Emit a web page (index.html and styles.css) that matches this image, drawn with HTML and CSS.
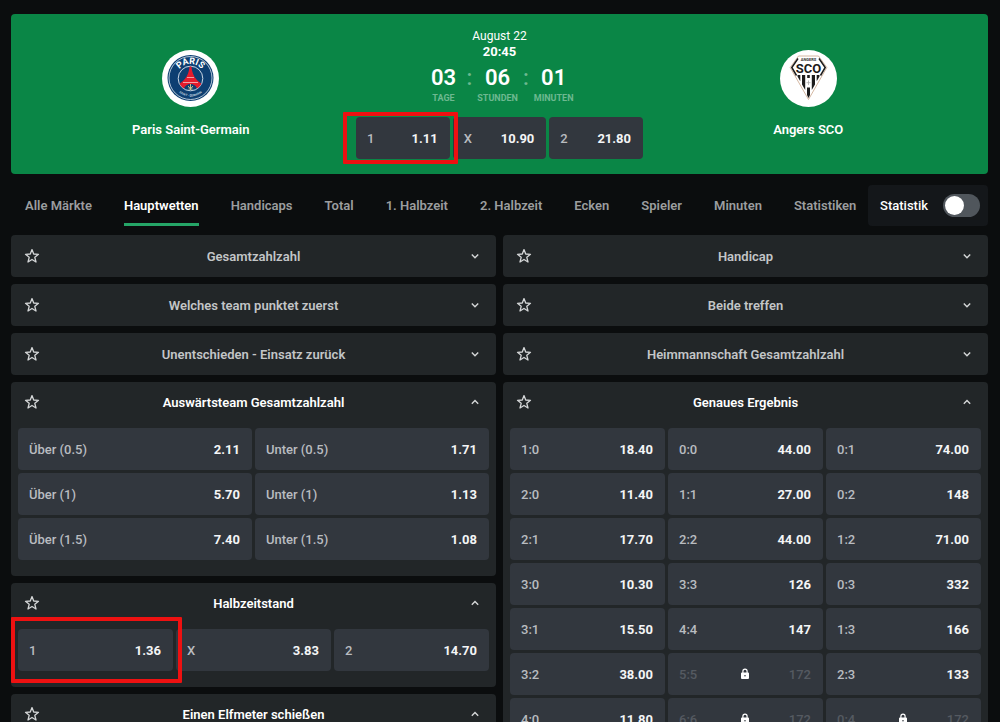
FILE: index.html
```
<!DOCTYPE html>
<html lang="de">
<head>
  <meta charset="UTF-8" />
  <meta name="viewport" content="width=device-width, initial-scale=1" />
  <title>Paris Saint-Germain - Angers SCO</title>
  <link rel="stylesheet" href="styles.css">
</head>
<body>
  <!-- shared icons -->
  <svg class="sprite" aria-hidden="true">
    <symbol id="star" viewBox="0 0 16 16">
      <path d="M8 1.6 9.700 6l4.800.3-3.700 3 1.200 4.700L8 11.500 4 14l1.200-4.700-3.700-3L6.300 6z" fill="none" stroke="currentColor" stroke-width="1.300" stroke-linejoin="round"/>
    </symbol>
    <symbol id="down" viewBox="0 0 10 10">
      <path d="M1.800 3.500 5 6.700l3.200-3.200" fill="none" stroke="currentColor" stroke-width="1.400"/>
    </symbol>
    <symbol id="up" viewBox="0 0 10 10">
      <path d="M1.800 6.700 5 3.500l3.200 3.200" fill="none" stroke="currentColor" stroke-width="1.400"/>
    </symbol>
    <symbol id="lock" viewBox="0 0 10 12">
      <path d="M2.900 5V3.300a2.100 2.100 0 0 1 4.200 0V5" fill="none" stroke="currentColor" stroke-width="1.200"/>
      <path fill-rule="evenodd" d="M2 4.400h6a1 1 0 0 1 1 1V10a1 1 0 0 1-1 1H2a1 1 0 0 1-1-1V5.400a1 1 0 0 1 1-1zM5 6.900a.8.8 0 1 0 0 1.600.8.8 0 0 0 0-1.600z" fill="currentColor"/>
    </symbol>
  </svg>

  <header class="match">
    <div class="team">
      <svg class="logo" viewBox="0 0 57 57" role="img" aria-label="Paris Saint-Germain">
        <defs>
          <path id="arcTop" d="M14 28.500a14.500 14.500 0 0 1 29 0"/>
          <path id="arcBottom" d="M10.500 28.500a18 18 0 0 0 36 0"/>
          <clipPath id="inner"><circle cx="28.500" cy="28.500" r="12"/></clipPath>
        </defs>
        <circle cx="28.500" cy="28.500" r="28.500" fill="#fff"/>
        <circle cx="28.500" cy="28" r="23" fill="#0d3f72"/>
        <circle cx="28.500" cy="28" r="21.500" fill="none" stroke="#dfe8f0" stroke-width=".8"/>
        <circle cx="28.500" cy="28.500" r="12.300" fill="none" stroke="#dfe8f0" stroke-width=".9"/>
        <g clip-path="url(#inner)">
          <path d="M27.500 16h2c.4 8 3.500 15 14 20l-6 8c-2-6.500-4.500-10-9-10s-7 3.500-9 10l-6-8c10.500-5 13.600-12 14-20z" fill="#e51b2c"/>
          <path d="M25 27.500h7M21 32.500h15" stroke="#f6dada" stroke-width=".7"/>
        </g>
        <path d="M28.500 34v6M26.300 36q.2 2 2.200 2 2 0 2.200-2M26.500 39h4" fill="none" stroke="#d7c98a" stroke-width=".9"/>
        <text class="logo-paris"><textPath href="#arcTop" startOffset="50%">PARIS</textPath></text>
        <text class="logo-sg"><textPath href="#arcBottom" startOffset="50%">SAINT - GERMAIN</textPath></text>
      </svg>
      <span class="team-name">Paris Saint-Germain</span>
    </div>

    <div class="kickoff">
      <span class="date">August 22</span>
      <strong class="time">20:45</strong>
      <div class="countdown">
        <div class="unit"><b>03</b><small>TAGE</small></div>
        <i>:</i>
        <div class="unit"><b>06</b><small>STUNDEN</small></div>
        <i>:</i>
        <div class="unit"><b>01</b><small>MINUTEN</small></div>
      </div>
      <div class="odds main-odds">
        <button class="odd marked"><span>1</span><b>1.11</b></button>
        <button class="odd"><span>X</span><b>10.90</b></button>
        <button class="odd"><span>2</span><b>21.80</b></button>
      </div>
    </div>

    <div class="team">
      <svg class="logo" viewBox="0 0 57 57" role="img" aria-label="Angers SCO">
        <circle cx="28.500" cy="28.500" r="28.500" fill="#fff"/>
        <path d="M18.500 6h20l8.300 11.500-18.300 32-18.300-32z" fill="none" stroke="#c9a58a" stroke-width=".8"/>
        <path d="M18 8.500 11.800 17.500 16.500 25.500M39 8.500l6.200 9-4.700 8" fill="none" stroke="#1c1c1c" stroke-width="1.500"/>
        <path d="M17.500 25h2.800v6.200l-2.800-4.800zM22 25h3.200v15l-3.200-5.600zM31.800 25H35v9.400L31.800 40zM36.700 25h2.800v1.400l-2.800 4.800zM27.200 25h2.600v3h-2.600zM27 37.500h3V45l-1.500 3L27 45z" fill="#1c1c1c"/>
        <path d="M28.500 30.500v4.500M26.500 32.700h4" stroke="#aaa" stroke-width=".8"/>
        <text class="logo-angers" x="28.500" y="11">ANGERS</text>
        <text class="logo-sco" x="28.500" y="23">SCO</text>
      </svg>
      <span class="team-name">Angers SCO</span>
    </div>
  </header>

  <div class="toolbar">
    <nav class="tabs">
      <a href="#">Alle Märkte</a>
      <a href="#" class="active">Hauptwetten</a>
      <a href="#">Handicaps</a>
      <a href="#">Total</a>
      <a href="#">1. Halbzeit</a>
      <a href="#">2. Halbzeit</a>
      <a href="#">Ecken</a>
      <a href="#">Spieler</a>
      <a href="#">Minuten</a>
      <a href="#">Statistiken</a>
    </nav>
    <label class="switch">Statistik <input type="checkbox"></label>
  </div>

  <main class="markets">
    <div class="column">
      <section class="panel">
        <div class="panel-head">
          <button aria-label="Favorit"><svg class="star"><use href="#star"/></svg></button>
          <h2>Gesamtzahlzahl</h2>
          <button aria-label="Öffnen"><svg class="chevron"><use href="#down"/></svg></button>
        </div>
      </section>
      <section class="panel">
        <div class="panel-head">
          <button aria-label="Favorit"><svg class="star"><use href="#star"/></svg></button>
          <h2>Welches team punktet zuerst</h2>
          <button aria-label="Öffnen"><svg class="chevron"><use href="#down"/></svg></button>
        </div>
      </section>
      <section class="panel">
        <div class="panel-head">
          <button aria-label="Favorit"><svg class="star"><use href="#star"/></svg></button>
          <h2>Unentschieden - Einsatz zurück</h2>
          <button aria-label="Öffnen"><svg class="chevron"><use href="#down"/></svg></button>
        </div>
      </section>
      <section class="panel open">
        <div class="panel-head">
          <button aria-label="Favorit"><svg class="star"><use href="#star"/></svg></button>
          <h2>Auswärtsteam Gesamtzahlzahl</h2>
          <button aria-label="Schließen"><svg class="chevron"><use href="#up"/></svg></button>
        </div>
        <div class="odds two">
          <button class="odd"><span>Über (0.5)</span><b>2.11</b></button>
          <button class="odd"><span>Unter (0.5)</span><b>1.71</b></button>
          <button class="odd"><span>Über (1)</span><b>5.70</b></button>
          <button class="odd"><span>Unter (1)</span><b>1.13</b></button>
          <button class="odd"><span>Über (1.5)</span><b>7.40</b></button>
          <button class="odd"><span>Unter (1.5)</span><b>1.08</b></button>
        </div>
      </section>
      <section class="panel open">
        <div class="panel-head">
          <button aria-label="Favorit"><svg class="star"><use href="#star"/></svg></button>
          <h2>Halbzeitstand</h2>
          <button aria-label="Schließen"><svg class="chevron"><use href="#up"/></svg></button>
        </div>
        <div class="odds">
          <button class="odd marked wide"><span>1</span><b>1.36</b></button>
          <button class="odd"><span>X</span><b>3.83</b></button>
          <button class="odd"><span>2</span><b>14.70</b></button>
        </div>
      </section>
      <section class="panel open">
        <div class="panel-head">
          <button aria-label="Favorit"><svg class="star"><use href="#star"/></svg></button>
          <h2>Einen Elfmeter schießen</h2>
          <button aria-label="Schließen"><svg class="chevron"><use href="#up"/></svg></button>
        </div>
      </section>
    </div>

    <div class="column">
      <section class="panel">
        <div class="panel-head">
          <button aria-label="Favorit"><svg class="star"><use href="#star"/></svg></button>
          <h2>Handicap</h2>
          <button aria-label="Öffnen"><svg class="chevron"><use href="#down"/></svg></button>
        </div>
      </section>
      <section class="panel">
        <div class="panel-head">
          <button aria-label="Favorit"><svg class="star"><use href="#star"/></svg></button>
          <h2>Beide treffen</h2>
          <button aria-label="Öffnen"><svg class="chevron"><use href="#down"/></svg></button>
        </div>
      </section>
      <section class="panel">
        <div class="panel-head">
          <button aria-label="Favorit"><svg class="star"><use href="#star"/></svg></button>
          <h2>Heimmannschaft Gesamtzahlzahl</h2>
          <button aria-label="Öffnen"><svg class="chevron"><use href="#down"/></svg></button>
        </div>
      </section>
      <section class="panel open">
        <div class="panel-head">
          <button aria-label="Favorit"><svg class="star"><use href="#star"/></svg></button>
          <h2>Genaues Ergebnis</h2>
          <button aria-label="Schließen"><svg class="chevron"><use href="#up"/></svg></button>
        </div>
        <div class="odds">
          <button class="odd"><span>1:0</span><b>18.40</b></button>
          <button class="odd"><span>0:0</span><b>44.00</b></button>
          <button class="odd"><span>0:1</span><b>74.00</b></button>
          <button class="odd"><span>2:0</span><b>11.40</b></button>
          <button class="odd"><span>1:1</span><b>27.00</b></button>
          <button class="odd"><span>0:2</span><b>148</b></button>
          <button class="odd"><span>2:1</span><b>17.70</b></button>
          <button class="odd"><span>2:2</span><b>44.00</b></button>
          <button class="odd"><span>1:2</span><b>71.00</b></button>
          <button class="odd"><span>3:0</span><b>10.30</b></button>
          <button class="odd"><span>3:3</span><b>126</b></button>
          <button class="odd"><span>0:3</span><b>332</b></button>
          <button class="odd"><span>3:1</span><b>15.50</b></button>
          <button class="odd"><span>4:4</span><b>147</b></button>
          <button class="odd"><span>1:3</span><b>166</b></button>
          <button class="odd"><span>3:2</span><b>38.00</b></button>
          <button class="odd" disabled><span>5:5</span><svg class="lock"><use href="#lock"/></svg><b>172</b></button>
          <button class="odd"><span>2:3</span><b>133</b></button>
          <button class="odd"><span>4:0</span><b>11.80</b></button>
          <button class="odd" disabled><span>6:6</span><svg class="lock"><use href="#lock"/></svg><b>172</b></button>
          <button class="odd" disabled><span>0:4</span><svg class="lock"><use href="#lock"/></svg><b>172</b></button>
        </div>
      </section>
    </div>
  </main>
</body>
</html>
```
FILE: styles.css
```
* {
  margin: 0;
  padding: 0;
  box-sizing: border-box;
}

body {
  height: 100vh;
  overflow: hidden;
  padding: 14px 12px 0 11px;
  background: #0b0d0e;
  color: #fff;
  font-family: Roboto, sans-serif;
  font-size: 13px;
  line-height: 15px;
}

button {
  border: none;
  background: none;
  color: inherit;
  font: inherit;
  cursor: pointer;
}

.sprite {
  display: none;
}

/* match header */

.match {
  display: grid;
  grid-template-columns: 1fr 290px 1fr;
  height: 160px;
  padding: 0 16px;
  border-radius: 4px;
  background: #0a8646;
}

.team {
  display: flex;
  flex-direction: column;
  align-items: center;
  gap: 15px;
  padding-top: 36px;
}

.logo {
  width: 57px;
  height: 57px;
}

.logo text {
  text-anchor: middle;
  font-weight: 700;
}

.logo-paris {
  fill: #fff;
  font-size: 9px;
}

.logo-sg {
  fill: #b9cadb;
  font-size: 3px;
}

.logo .logo-angers {
  fill: #333;
  font-size: 4px;
}

.logo .logo-sco {
  fill: #1c1c1c;
  font-size: 13px;
}

.team-name {
  font-weight: 600;
}

.kickoff {
  display: flex;
  flex-direction: column;
  align-items: center;
  padding-top: 15px;
}

.date {
  font-size: 12px;
}

.time {
  font-weight: 700;
}

.countdown {
  display: flex;
  justify-content: center;
  gap: 5px;
  margin-top: 6px;
}

.unit {
  display: flex;
  flex-direction: column;
  align-items: center;
  min-width: 36px;
}

.unit b {
  font-size: 22px;
  font-weight: 600;
  line-height: 26px;
}

.unit small {
  color: #6db990;
  font-size: 9px;
  font-weight: 700;
  line-height: 14px;
}

.countdown i {
  color: #6db990;
  font-size: 22px;
  font-style: normal;
  font-weight: 500;
  line-height: 26px;
}

/* tabs */

.toolbar {
  display: flex;
  justify-content: space-between;
  margin: 11px 0 9px;
}

.tabs {
  display: flex;
  gap: 32px;
  padding-left: 14px;
}

.tabs a {
  height: 41px;
  color: #9b9d9f;
  font-weight: 600;
  line-height: 41px;
  text-decoration: none;
  white-space: nowrap;
}

.tabs .active {
  border-bottom: 3px solid #25a567;
  color: #fff;
}

.switch {
  display: flex;
  align-items: center;
  gap: 15px;
  height: 41px;
  padding: 0 8px 0 12px;
  border-radius: 4px;
  background: #14171a;
  font-weight: 500;
}

.switch input {
  appearance: none;
  width: 37px;
  height: 23px;
  padding: 2px;
  border-radius: 12px;
  background: #50565c;
}

.switch input::before {
  content: "";
  display: block;
  width: 19px;
  height: 19px;
  border-radius: 50%;
  background: #fff;
}

.switch input:checked::before {
  margin-left: auto;
}

/* markets */

.markets {
  display: grid;
  grid-template-columns: 1fr 1fr;
  align-items: start;
  gap: 7px;
}

.column {
  display: flex;
  flex-direction: column;
  gap: 7px;
}

.panel {
  border-radius: 4px;
  background: #222628;
}

.panel.open {
  padding-bottom: 16px;
}

.panel-head {
  display: grid;
  grid-template: 100% / 42px 1fr 42px;
  align-items: center;
  height: 42px;
}

.panel-head button {
  display: grid;
  place-items: center;
  height: 100%;
  color: #d5d7d8;
}

.panel-head h2 {
  color: #c3c5c7;
  font-size: 13px;
  font-weight: 600;
  text-align: center;
}

.open .panel-head {
  height: 40px;
  margin-bottom: 6px;
}

.open h2 {
  color: #fff;
}

.star {
  width: 16px;
  height: 16px;
}

.chevron {
  width: 10px;
  height: 10px;
}

.odds {
  display: grid;
  grid-template-columns: repeat(3, 1fr);
  gap: 3px;
  padding: 0 7px;
}

.odds.two {
  grid-template-columns: repeat(2, 1fr);
}

.main-odds {
  width: 287px;
  margin-top: 12px;
  padding: 0;
}

.odd {
  position: relative;
  display: flex;
  justify-content: space-between;
  align-items: center;
  height: 42px;
  padding: 0 12px 0 11px;
  border-radius: 4px;
  background: #32373e;
}

.odd span {
  color: #b9bcc0;
  font-weight: 500;
}

.odd b {
  color: #f4f5f6;
  font-weight: 700;
}

.odd:disabled {
  display: grid;
  grid-template-columns: 1fr auto 1fr;
  text-align: left;
}

.odd:disabled span,
.odd:disabled b {
  color: #555a61;
  font-weight: 500;
}

.odd:disabled b {
  text-align: right;
}

.lock {
  width: 10px;
  height: 12px;
  color: #fff;
}

/* red frame over the picked outcome */
.marked::after {
  content: "";
  position: absolute;
  z-index: 1;
  inset: -5px -8px -5px -13px;
  border: 4px solid #ee1111;
  border-radius: 1px;
}

.marked.wide::after {
  inset: -12px -9px -12px -7px;
}
```
